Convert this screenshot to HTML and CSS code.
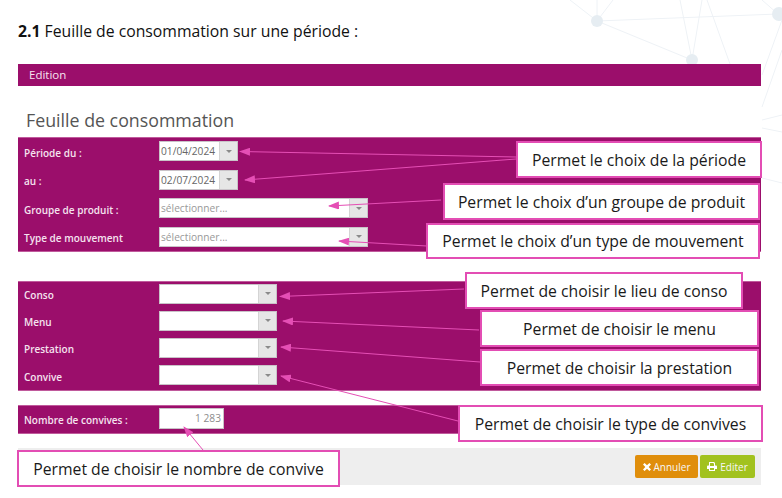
FILE: index.html
```html
<!DOCTYPE html>
<html lang="fr">
<head>
    <meta charset="UTF-8">
    <title>Feuille de consommation</title>
    <link rel="stylesheet" href="styles.css">
</head>
<body>
    <!-- faint network decoration, top right -->
    <svg class="network" width="782" height="498" viewBox="0 0 782 498">
        <g class="net-lines">
            <path d="M597 21 L778 14 M597 21 L692 60 M597 21 L570 0 M597 21 L597 0 M597 21 L613 0"/>
            <path d="M692 60 L680 0 M692 60 L702 0 M730 64 L707 0 M762 75 L782 20 M762 107 L782 50"/>
            <path d="M762 120 L782 115 M762 128 L782 132 M762 178 L782 183 M778 14 L762 0"/>
        </g>
        <circle class="net-node" cx="597" cy="21" r="6"/>
        <circle class="net-node" cx="692" cy="60" r="6"/>
        <circle class="net-node" cx="779" cy="14" r="7"/>
    </svg>

    <div class="page">
        <p class="intro"><b>2.1</b> Feuille de consommation sur une période :</p>

        <div class="edition-bar">Edition</div>

        <h1 class="form-title">Feuille de consommation</h1>

        <section class="panel panel-periode">
            <div class="row">
                <label class="row-label">Période du :</label>
                <div class="field field-date"><span class="field-value">01/04/2024</span><span class="field-btn"><i class="caret"></i></span></div>
            </div>
            <div class="row">
                <label class="row-label">au :</label>
                <div class="field field-date"><span class="field-value">02/07/2024</span><span class="field-btn"><i class="caret"></i></span></div>
            </div>
            <div class="row">
                <label class="row-label">Groupe de produit :</label>
                <div class="field field-wide"><span class="field-value placeholder">sélectionner...</span><span class="field-btn"><i class="caret"></i></span></div>
            </div>
            <div class="row">
                <label class="row-label">Type de mouvement</label>
                <div class="field field-wide"><span class="field-value placeholder">sélectionner...</span><span class="field-btn"><i class="caret"></i></span></div>
            </div>
        </section>

        <section class="panel panel-conso">
            <div class="row">
                <label class="row-label">Conso</label>
                <div class="field field-mid"><span class="field-value"></span><span class="field-btn"><i class="caret"></i></span></div>
            </div>
            <div class="row">
                <label class="row-label">Menu</label>
                <div class="field field-mid"><span class="field-value"></span><span class="field-btn"><i class="caret"></i></span></div>
            </div>
            <div class="row">
                <label class="row-label">Prestation</label>
                <div class="field field-mid"><span class="field-value"></span><span class="field-btn"><i class="caret"></i></span></div>
            </div>
            <div class="row">
                <label class="row-label">Convive</label>
                <div class="field field-mid"><span class="field-value"></span><span class="field-btn"><i class="caret"></i></span></div>
            </div>
        </section>

        <section class="panel panel-nombre">
            <div class="row">
                <label class="row-label">Nombre de convives :</label>
                <div class="field field-num"><span class="field-value number">1 283</span></div>
            </div>
        </section>

        <div class="actions">
            <button class="btn btn-cancel">
                <svg width="8" height="8" viewBox="0 0 8 8"><path d="M1.6 0 L4 2.3 L6.4 0 L8 1.6 L5.7 4 L8 6.4 L6.4 8 L4 5.7 L1.6 8 L0 6.4 L2.3 4 L0 1.6 Z" fill="#fff"/></svg>
                Annuler
            </button>
            <button class="btn btn-edit">
                <svg width="10" height="9" viewBox="0 0 10 9"><path d="M2 0 H7 L8 1 V3.4 H9 Q10 3.4 10 4.4 V7 H8 V9 H2 V7 H0 V4.4 Q0 3.4 1 3.4 H2 Z M3 1 V4 H7 V1.6 H6.4 V1 Z M3 6 V8 H7 V6 Z" fill="#fff" fill-rule="evenodd"/></svg>
                Editer
            </button>
        </div>
    </div>

    <!-- annotation arrows -->
    <svg class="arrows" width="782" height="498" viewBox="0 0 782 498">
        <defs>
            <marker id="head" markerWidth="11" markerHeight="8" refX="10" refY="4" orient="auto" markerUnits="userSpaceOnUse">
                <path d="M0 0 L11 4 L0 8 Z" fill="#e54fb5"/>
            </marker>
        </defs>
        <line x1="516" y1="157" x2="240" y2="151.5"/>
        <line x1="516" y1="159" x2="245" y2="180"/>
        <line x1="441" y1="200" x2="329" y2="206"/>
        <line x1="427" y1="246" x2="339" y2="241"/>
        <line x1="464" y1="289" x2="280" y2="296.5"/>
        <line x1="479" y1="330" x2="283" y2="321"/>
        <line x1="480" y1="362" x2="281" y2="347"/>
        <line x1="458" y1="421" x2="281" y2="376"/>
        <line x1="203" y1="450" x2="184" y2="427"/>
    </svg>

    <div class="callout c1">Permet le choix de la période</div>
    <div class="callout c2">Permet le choix d’un groupe de produit</div>
    <div class="callout c3">Permet le choix d’un type de mouvement</div>
    <div class="callout c4">Permet de choisir le lieu de conso</div>
    <div class="callout c5">Permet de choisir le menu</div>
    <div class="callout c6">Permet de choisir la prestation</div>
    <div class="callout c7">Permet de choisir le type de convives</div>
    <div class="callout c8">Permet de choisir le nombre de convive</div>
</body>
</html>
```

FILE: styles.css
```css
* {
    margin: 0;
    padding: 0;
    box-sizing: border-box;
}

html, body {
    height: 100%;
    overflow: hidden;
}

body {
    font-family: "Open Sans", "Noto Sans", sans-serif;
    background: #ffffff;
    color: #111111;
}

.network {
    position: absolute;
    left: 0;
    top: 0;
}

.net-lines path {
    stroke: #eef2f6;
    stroke-width: 1;
    fill: none;
}

.net-node {
    fill: #e6edf2;
}

.page {
    position: relative;
    width: 782px;
    padding: 22px 21px 0 18px;
}

.intro {
    font-size: 15.75px;
    line-height: 18px;
    color: #111111;
    height: 42px;
}

.edition-bar {
    height: 22px;
    line-height: 22px;
    background: #9b0e6b;
    color: #f7e4f0;
    font-size: 11.5px;
    padding-left: 11px;
}

.form-title {
    font-size: 17.8px;
    font-weight: 400;
    line-height: 24px;
    color: #555555;
    padding: 22px 0 0 8px;
    height: 51px;
}

.panel {
    background: #9b0e6b;
    border-top: 1px solid #c05a9c;
    border-bottom: 1px solid #c05a9c;
    padding-left: 6px;
    display: flex;
    flex-direction: column;
}

.panel-periode {
    height: 115px;
    padding-top: 3px;
    gap: 8.5px;
}

.panel-conso {
    height: 110px;
    margin-top: 29px;
    padding-top: 1.5px;
    gap: 7.2px;
}

.panel-nombre {
    height: 29px;
    margin-top: 14px;
    padding-top: 2px;
}

.row {
    display: flex;
    align-items: center;
    height: 20px;
}

.row-label {
    width: 135px;
    padding-top: 3px;
    font-size: 10px;
    font-weight: 600;
    color: #f5e3ef;
}

.field {
    display: flex;
    height: 20px;
    background: #ffffff;
    border: 1px solid #c9c3c8;
    font-size: 10.2px;
    color: #666666;
}

.field-date { width: 79px; }
.field-wide { width: 209px; }
.field-mid { width: 118px; }
.field-num { width: 65px; height: 21px; }

.field-value {
    flex: 1;
    line-height: 18px;
    padding-left: 1px;
    white-space: nowrap;
    overflow: hidden;
}

.placeholder {
    color: #999999;
}

.number {
    text-align: right;
    padding-right: 2px;
    line-height: 19px;
    color: #8c8c8c;
}

.field-btn {
    width: 18px;
    background: #e6e6e6;
    border-left: 1px solid #d4d4d4;
    display: flex;
    align-items: center;
    justify-content: center;
}

.caret {
    width: 0;
    height: 0;
    border-left: 3px solid transparent;
    border-right: 3px solid transparent;
    border-top: 3px solid #8a8a8a;
}

.actions {
    height: 37px;
    margin-top: 14px;
    background: #eeeeee;
    display: flex;
    justify-content: flex-end;
    align-items: center;
    gap: 2px;
    padding-right: 6px;
}

.btn {
    height: 23px;
    border: none;
    border-radius: 2px;
    color: #f7f7f7;
    font-family: inherit;
    font-size: 10px;
    font-weight: 500;
    display: flex;
    align-items: center;
    justify-content: center;
    gap: 3px;
}

.btn-cancel {
    width: 63px;
    background: #e08e0b;
}

.btn-edit {
    width: 55px;
    background: #a2c21f;
}

.arrows {
    position: absolute;
    left: 0;
    top: 0;
}

.arrows line {
    stroke: #e54fb5;
    stroke-width: 1;
    marker-end: url(#head);
}

.callout {
    position: absolute;
    background: #ffffff;
    border: 2px solid #e34db4;
    color: #1a1a1a;
    font-size: 15.75px;
    display: flex;
    align-items: center;
    justify-content: center;
    white-space: nowrap;
}

.c1 { left: 516px; top: 141px; width: 246px; height: 37px; }
.c2 { left: 443px; top: 183px; width: 317px; height: 37px; }
.c3 { left: 426px; top: 223px; width: 334px; height: 36px; }
.c4 { left: 465px; top: 272px; width: 278px; height: 37px; }
.c5 { left: 480px; top: 310px; width: 279px; height: 37px; }
.c6 { left: 480px; top: 349px; width: 279px; height: 37px; }
.c7 { left: 458px; top: 405px; width: 305px; height: 37px; }
.c8 { left: 17px; top: 450px; width: 323px; height: 37px; }
```
